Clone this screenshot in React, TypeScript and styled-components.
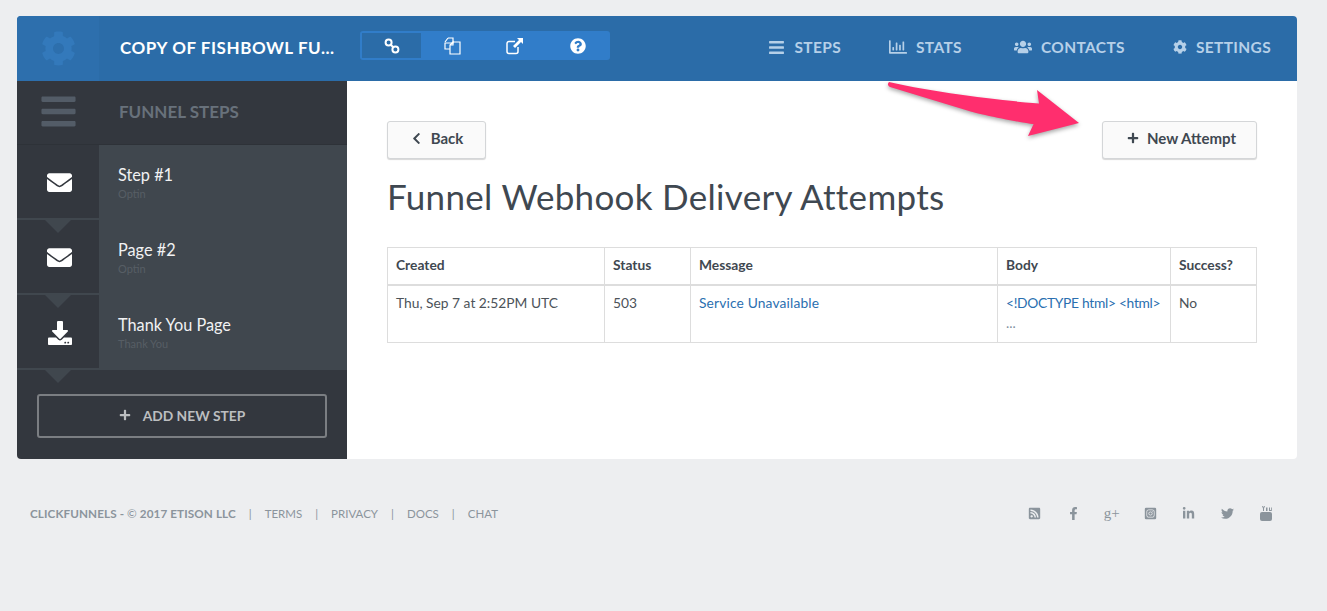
import styled, { createGlobalStyle } from "styled-components";
import {
  FaBars,
  FaChevronLeft,
  FaCog,
  FaDownload,
  FaEnvelope,
  FaFacebookF,
  FaInstagramSquare,
  FaLinkedinIn,
  FaPlus,
  FaQuestionCircle,
  FaRegChartBar,
  FaRssSquare,
  FaTwitter,
  FaUsers,
} from "react-icons/fa";

const GlobalStyle = createGlobalStyle`
  html, body {
    margin: 0;
    padding: 0;
    background: #edeef0;
    font-family: Lato, "Open Sans", sans-serif;
    color: #3f4851;
  }
`;

const Page = styled.div`
  width: 1327px;
  height: 611px;
  padding: 16px 30px 0 17px;
  box-sizing: border-box;
  overflow: hidden;
`;

const Panel = styled.div`
  width: 1280px;
  height: 443px;
  border-radius: 4px;
  overflow: hidden;
  display: flex;
  flex-direction: column;
  background: #fff;
`;

const TopBar = styled.header`
  height: 65px;
  flex: none;
  display: flex;
  align-items: center;
  background: #2b6ca8;
`;

const LogoCell = styled.div`
  width: 82px;
  height: 100%;
  flex: none;
  display: flex;
  align-items: center;
  justify-content: center;
  background: #2d6fad;
  color: #3379bb;
`;

const FunnelName = styled.div`
  width: 240px;
  margin-left: 21px;
  padding-bottom: 3px;
  flex: none;
  font-size: 17px;
  font-weight: 700;
  letter-spacing: 0.55px;
  color: #fff;
  white-space: nowrap;
`;

const ToggleGroup = styled.div`
  width: 250px;
  height: 29px;
  box-sizing: border-box;
  align-self: flex-start;
  margin-top: 15px;
  padding: 2px;
  border-radius: 3px;
  background: #317dc9;
  display: grid;
  grid-template-columns: 59px 62px 64px 61px;
`;

const ToggleItem = styled.div<{ $active?: boolean }>`
  display: flex;
  align-items: center;
  justify-content: center;
  color: #fff;
  background: ${(props) => (props.$active ? "#2b6ca8" : "transparent")};
`;

const Nav = styled.nav`
  margin-left: auto;
  padding: 0 26px 3px 0;
  display: flex;
  align-items: center;
`;

const NavItem = styled.div<{ $lead: number }>`
  display: flex;
  align-items: center;
  gap: 9px;
  margin-left: ${(props) => props.$lead}px;
  font-size: 15.5px;
  font-weight: 700;
  letter-spacing: 0.35px;
  color: #b6d0e8;
`;

const Body = styled.div`
  flex: 1;
  display: flex;
  min-height: 0;
`;

const Sidebar = styled.aside`
  width: 330px;
  flex: none;
  display: flex;
  flex-direction: column;
  background: #33373e;
`;

const SideHead = styled.div`
  height: 64px;
  flex: none;
  box-sizing: border-box;
  padding-bottom: 3px;
  display: flex;
  align-items: center;
  border-bottom: 1px solid #2e3238;
`;

const SideHeadIcon = styled.div`
  width: 82px;
  height: 100%;
  flex: none;
  display: flex;
  align-items: center;
  justify-content: center;
  color: #535c67;
`;

const SideHeadTitle = styled.div`
  margin-left: 20px;
  font-size: 17px;
  font-weight: 700;
  color: #68717b;
`;

const Step = styled.div`
  height: 75px;
  flex: none;
  position: relative;
  display: flex;
  background: #40474e;
`;

const StepIcon = styled.div`
  width: 82px;
  flex: none;
  box-sizing: border-box;
  display: flex;
  align-items: center;
  justify-content: center;
  padding: 2px 0 0 3px;
  color: #fff;
  background: #33373e;
  border-bottom: 2px solid #40474e;
`;

const Notch = styled.span`
  position: absolute;
  left: 28px;
  top: 75px;
  z-index: 1;
  width: 0;
  height: 0;
  border-left: 13px solid transparent;
  border-right: 13px solid transparent;
  border-top: 13px solid #40474e;
`;

const StepText = styled.div`
  margin-left: 19px;
  padding-top: 20px;
`;

const StepName = styled.div`
  font-size: 16.3px;
  line-height: 20px;
  color: #f1f2f3;
`;

const StepKind = styled.div`
  margin-top: 2px;
  font-size: 11px;
  line-height: 14px;
  color: #575e65;
`;

const SideFoot = styled.div`
  flex: 1;
  padding: 24px 20px 0;
`;

const AddStep = styled.button`
  width: 100%;
  height: 44px;
  padding: 0 0 2px;
  display: flex;
  align-items: center;
  justify-content: center;
  gap: 12px;
  background: transparent;
  border: 2px solid #7b7e82;
  border-radius: 3px;
  font-family: inherit;
  font-size: 13.8px;
  font-weight: 700;
  color: #bcbec0;
`;

const Main = styled.main`
  flex: 1;
  position: relative;
  padding: 40px 41px 40px 40px;
`;

const Arrow = styled.svg`
  position: absolute;
  left: 530px;
  top: -2px;
  filter: drop-shadow(0 2px 2px rgba(0, 0, 0, 0.35));
`;

const Actions = styled.div`
  display: flex;
  justify-content: space-between;
`;

const Button = styled.button<{ $width: number; $shift?: number }>`
  width: ${(props) => props.$width}px;
  height: 38px;
  padding: 0 0 4px ${(props) => props.$shift ?? 0}px;
  display: flex;
  align-items: center;
  justify-content: center;
  gap: 8px;
  background: #fafafa;
  border: 1px solid #d4d6d8;
  border-radius: 3px;
  box-shadow: 0 1px 1px rgba(0, 0, 0, 0.16);
  font-family: inherit;
  font-size: 15px;
  font-weight: 700;
  color: #3f4851;
`;

const Title = styled.h1`
  margin: 19px 0 32px;
  font-size: 35px;
  line-height: 37px;
  font-weight: 400;
  letter-spacing: 0.3px;
  color: #3f4851;
`;

const Table = styled.table`
  width: 869px;
  table-layout: fixed;
  border-collapse: collapse;
  font-size: 13.8px;
  line-height: 20px;
`;

const Th = styled.th<{ $width: number }>`
  width: ${(props) => props.$width}px;
  height: 37px;
  box-sizing: border-box;
  padding: 7px 8px 9px;
  text-align: left;
  font-weight: 700;
  color: #3f4851;
  border: 1px solid #dddddd;
  border-bottom-width: 2px;
`;

const Td = styled.td`
  height: 57px;
  box-sizing: border-box;
  padding: 7px 8px 9px;
  vertical-align: top;
  color: #4c5359;
  border: 1px solid #dddddd;
`;

const Link = styled.a`
  color: #2a6fb0;
  letter-spacing: 0.15px;
`;

const BodyLink = styled(Link)`
  display: block;
  white-space: nowrap;
  letter-spacing: -0.3px;
`;

const Ellipsis = styled.span`
  color: #7f8f9f;
`;

const Footer = styled.footer`
  margin-top: 45px;
  margin-left: 13px;
  display: flex;
  align-items: center;
  justify-content: space-between;
  height: 18px;
  font-size: 11.5px;
  color: #8b949c;
`;

const Legal = styled.div`
  display: flex;
  align-items: center;
  gap: 13px;
`;

const Brand = styled.span`
  font-size: 11.7px;
  font-weight: 700;
  letter-spacing: 0.1px;
  span {
    font-weight: 400;
  }
`;

const Social = styled.div`
  display: grid;
  grid-template-columns: repeat(7, 38.5px);
  justify-items: center;
  align-items: center;
  margin-right: 12px;
  color: #8b949c;
`;

const GooglePlus = styled.span`
  font-family: "Liberation Serif", serif;
  font-size: 15px;
  line-height: 14px;
`;

const LinkGlyph = () => (
  <svg width="16" height="16" viewBox="0 0 16 16" fill="none" stroke="#fff" strokeWidth="2">
    <circle cx="4.6" cy="4.6" r="3" />
    <circle cx="11.4" cy="11.4" r="3" />
    <path d="M6.5 6.5l3 3" />
  </svg>
);

const FilesGlyph = () => (
  <svg width="17" height="18" viewBox="0 0 17 18" fill="none" stroke="#fff" strokeWidth="1.2">
    <path d="M4 1h5v5H1v6h5M4 1L1 5" />
    <path d="M9 5h7v12H6V8l3-3v3H6" />
  </svg>
);

const ExternalGlyph = () => (
  <svg width="18" height="18" viewBox="0 0 18 18" fill="none">
    <path d="M12 10v4.5a2 2 0 0 1-2 2H3a2 2 0 0 1-2-2v-8a2 2 0 0 1 2-2h6" stroke="#fff" strokeWidth="1.5" />
    <path d="M11 1h6v6l-2-2-6 6-2-2 6-6z" fill="#fff" />
  </svg>
);

const YoutubeGlyph = () => (
  <svg width="12" height="15" viewBox="0 0 12 15" fill="currentColor">
    <path d="M2 0l1 2.500V5h1V2.500L5 0H4L3.500 1.500 3 0zM6 1.500h1.500V5H6zM9 1.500h1V4h1V1.500h.8V5H9z" />
    <rect x="0" y="6" width="12" height="9" rx="2" />
  </svg>
);

const steps = [
  { name: "Step #1", kind: "Optin", icon: <FaEnvelope size={25} /> },
  { name: "Page #2", kind: "Optin", icon: <FaEnvelope size={25} /> },
  { name: "Thank You Page", kind: "Thank You", icon: <FaDownload size={24} /> },
];

const App = () => (
  <Page>
    <GlobalStyle />
    <Panel>
      <TopBar>
        <LogoCell>
          <FaCog size={35} />
        </LogoCell>
        <FunnelName>COPY OF FISHBOWL FU...</FunnelName>
        <ToggleGroup>
          <ToggleItem $active>
            <LinkGlyph />
          </ToggleItem>
          <ToggleItem>
            <FilesGlyph />
          </ToggleItem>
          <ToggleItem>
            <ExternalGlyph />
          </ToggleItem>
          <ToggleItem>
            <FaQuestionCircle size={16} />
          </ToggleItem>
        </ToggleGroup>
        <Nav>
          <NavItem $lead={0}>
            <FaBars size={17} />
            STEPS
          </NavItem>
          <NavItem $lead={48}>
            <FaRegChartBar size={18} />
            STATS
          </NavItem>
          <NavItem $lead={52}>
            <FaUsers size={18} />
            CONTACTS
          </NavItem>
          <NavItem $lead={48}>
            <FaCog size={14} />
            SETTINGS
          </NavItem>
        </Nav>
      </TopBar>
      <Body>
        <Sidebar>
          <SideHead>
            <SideHeadIcon>
              <FaBars size={39} />
            </SideHeadIcon>
            <SideHeadTitle>FUNNEL STEPS</SideHeadTitle>
          </SideHead>
          {steps.map((step) => (
            <Step key={step.name}>
              <StepIcon>{step.icon}</StepIcon>
              <Notch />
              <StepText>
                <StepName>{step.name}</StepName>
                <StepKind>{step.kind}</StepKind>
              </StepText>
            </Step>
          ))}
          <SideFoot>
            <AddStep>
              <FaPlus size={12} />
              ADD NEW STEP
            </AddStep>
          </SideFoot>
        </Sidebar>
        <Main>
          <Arrow width="220" height="70" viewBox="0 0 220 70">
            <path
              d="M12 3 C10 5 11 7 13 8 L92 32 C100 35 150 45 156.600 45 L151 57 L202 44 L160 11 L162 24.500 C130 22 60 14 12 3 Z"
              fill="#ff2e6e"
            />
          </Arrow>
          <Actions>
            <Button $width={99}>
              <FaChevronLeft size={13} />
              Back
            </Button>
            <Button $width={155} $shift={4}>
              <FaPlus size={12} />
              New Attempt
            </Button>
          </Actions>
          <Title>Funnel Webhook Delivery Attempts</Title>
          <Table>
            <thead>
              <tr>
                <Th $width={217}>Created</Th>
                <Th $width={86}>Status</Th>
                <Th $width={307}>Message</Th>
                <Th $width={173}>Body</Th>
                <Th $width={86}>Success?</Th>
              </tr>
            </thead>
            <tbody>
              <tr>
                <Td>Thu, Sep 7 at 2:52PM UTC</Td>
                <Td>503</Td>
                <Td>
                  <Link>Service Unavailable</Link>
                </Td>
                <Td>
                  <BodyLink>{"<!DOCTYPE html> <html>"}</BodyLink>
                  <Ellipsis>...</Ellipsis>
                </Td>
                <Td>No</Td>
              </tr>
            </tbody>
          </Table>
        </Main>
      </Body>
    </Panel>
    <Footer>
      <Legal>
        <Brand>
          CLICKFUNNELS - <span>©</span> 2017 ETISON LLC
        </Brand>
        <span>|</span>
        <span>TERMS</span>
        <span>|</span>
        <span>PRIVACY</span>
        <span>|</span>
        <span>DOCS</span>
        <span>|</span>
        <span>CHAT</span>
      </Legal>
      <Social>
        <FaRssSquare size={13} />
        <FaFacebookF size={13} />
        <GooglePlus>g+</GooglePlus>
        <FaInstagramSquare size={13} />
        <FaLinkedinIn size={13} />
        <FaTwitter size={13} />
        <YoutubeGlyph />
      </Social>
    </Footer>
  </Page>
);

export default App;
